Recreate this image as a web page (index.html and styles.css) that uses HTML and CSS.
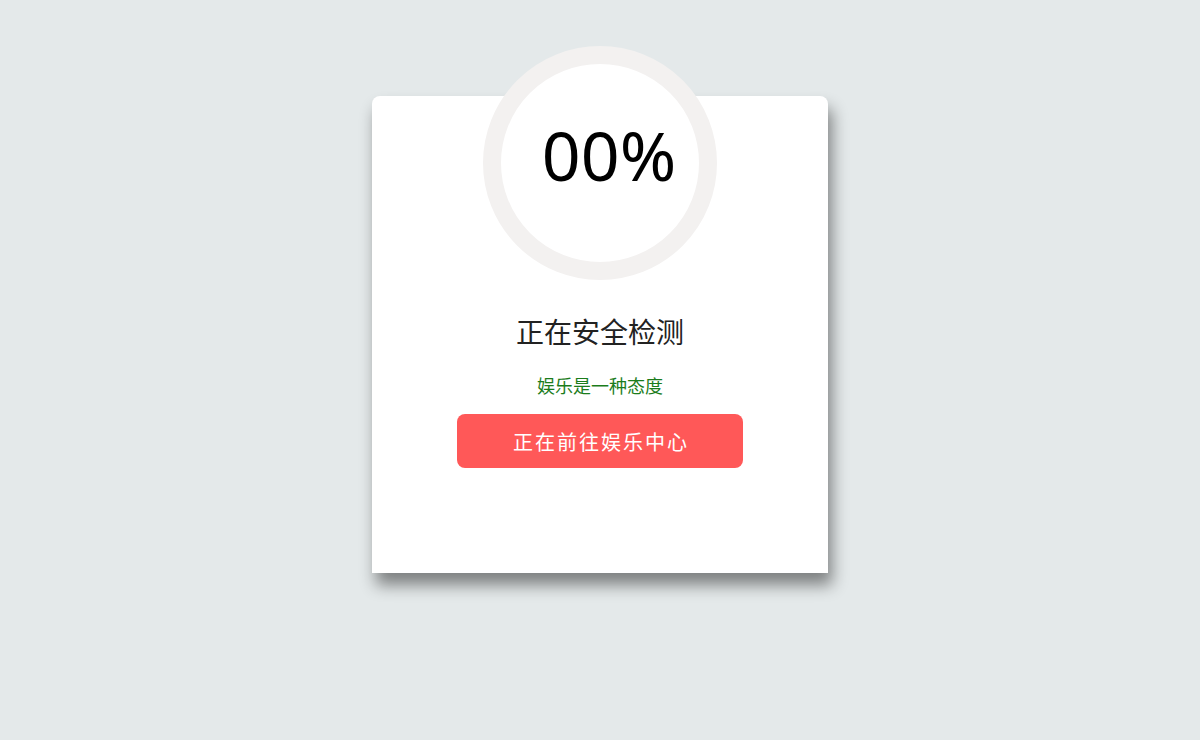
FILE: index.html
```html
<!DOCTYPE html>
<html lang="zh-CN">
<head>
<meta charset="utf-8">
<title>正在安全检测</title>
<link rel="stylesheet" href="styles.css">
</head>
<body>
<div class="page">
  <div class="card">
    <div class="ring"><span class="pct">00%</span></div>
    <h1 class="title">正在安全检测</h1>
    <p class="sub">娱乐是一种态度</p>
    <a class="btn">正在前往娱乐中心</a>
  </div>
</div>
</body>
</html>
```

FILE: styles.css
```css
html, body {
  margin: 0;
  padding: 0;
  background: #e4e9ea;
  font-family: "Noto Sans", "Noto Sans CJK SC", sans-serif;
}
.page {
  display: flex;
  justify-content: center;
  align-items: flex-start;
  padding-top: 96px;
  min-height: 100vh;
  box-sizing: border-box;
}
.card {
  width: 456px;
  height: 477px;
  background: #ffffff;
  border-radius: 8px 8px 0 0;
  box-shadow: 4px 12px 16px rgba(0, 0, 0, 0.45);
  display: flex;
  flex-direction: column;
  align-items: center;
}
.ring {
  margin-top: -50px;
  width: 198px;
  height: 198px;
  border: 18px solid #f3f1f0;
  border-radius: 50%;
  background: #ffffff;
  display: flex;
  align-items: center;
  justify-content: center;
  box-sizing: content-box;
}
.pct {
  font-family: "Noto Sans", sans-serif;
  font-size: 68px;
  line-height: 1;
  color: #000;
  padding-left: 18px;
  padding-bottom: 16px;
}
.title {
  margin: 35px 0 0;
  font-family: "Noto Sans CJK SC", sans-serif;
  font-size: 28px;
  font-weight: 400;
  line-height: 32px;
  color: #222;
}
.sub {
  margin: 27px 0 0;
  font-family: "Noto Sans CJK SC", sans-serif;
  font-size: 18px;
  line-height: 22px;
  color: #1b7c1b;
}
.btn {
  margin-top: 18px;
  width: 286px;
  height: 54px;
  border-radius: 8px;
  background: #ff5858;
  color: #fff;
  display: flex;
  align-items: center;
  justify-content: center;
  font-family: "Noto Sans CJK SC", sans-serif;
  font-size: 20px;
  letter-spacing: 2px;
  text-indent: 2px;
}
```
